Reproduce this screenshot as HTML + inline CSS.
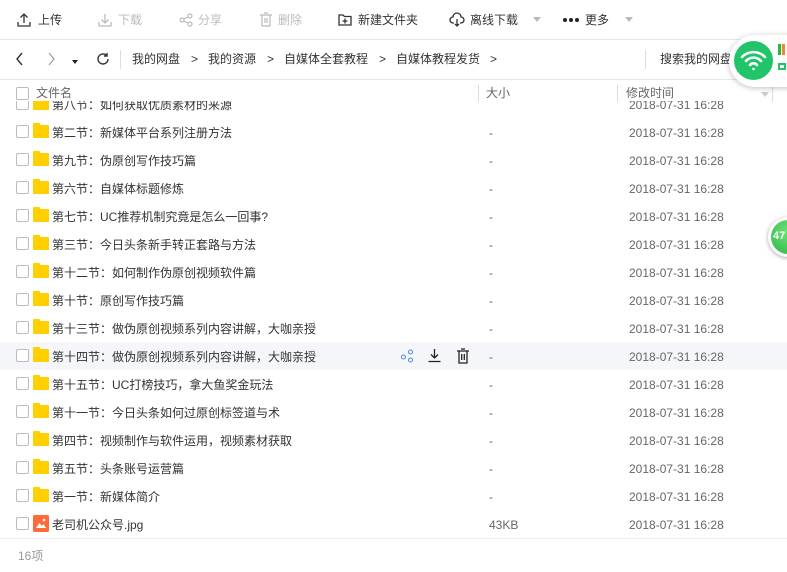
<!DOCTYPE html>
<html><head><meta charset="utf-8"><style>
*{margin:0;padding:0;box-sizing:border-box}
body{width:787px;height:572px;overflow:hidden;background:#fff;font-family:"Liberation Sans","Noto Sans CJK SC",sans-serif;font-size:12px;color:#333;position:relative}
.a{position:absolute;white-space:nowrap}
.tb{top:12px;font-size:12px;line-height:16px}
.dis{color:#bbb}
.hl{position:absolute;left:0;width:787px;height:1px;background:#e8e8e8}
.row{position:absolute;left:0;width:787px;height:28px}
.cb{position:absolute;left:16px;top:7px;width:13px;height:13px;border:1px solid #bbb;border-radius:2px;background:#fff}
.fd{position:absolute;left:33px;top:7px;width:16px;height:13px;background:#ffcf00;border-radius:1px}
.fd:before{content:"";position:absolute;left:0;top:-2px;width:7px;height:3px;background:#ffcf00;border-radius:1px 1px 0 0}
.nm{position:absolute;left:52px;top:7px;line-height:16px;color:#333}
.sz{position:absolute;left:489px;top:7px;line-height:16px;color:#666}
.dt{position:absolute;left:629px;top:7px;line-height:16px;color:#666}
.bc{position:absolute;top:51px;line-height:16px}
.dot{position:absolute;top:18px;width:4px;height:4px;border-radius:50%;background:#222}
</style></head><body>
<svg class="a" style="left:16px;top:12px" width="16" height="16" viewBox="0 0 16 16" fill="none" stroke="#333" stroke-width="1.3"><path d="M8 11V2M4.5 5.5L8 2l3.5 3.5M2 10v4h12v-4"/></svg>
<div class="a tb" style="left:38px">上传</div>
<svg class="a" style="left:97px;top:12px" width="16" height="16" viewBox="0 0 16 16" fill="none" stroke="#bbb" stroke-width="1.3"><path d="M8 2v9M4.5 7.5L8 11l3.5-3.5M2 10v4h12v-4"/></svg>
<div class="a tb dis" style="left:118px">下载</div>
<svg class="a" style="left:178px;top:12px" width="16" height="16" viewBox="0 0 16 16" fill="none" stroke="#bbb" stroke-width="1.2"><circle cx="4" cy="8" r="2"/><circle cx="12" cy="4" r="2"/><circle cx="12" cy="12" r="2"/><path d="M6 7l4-2M6 9l4 2"/></svg>
<div class="a tb dis" style="left:198px">分享</div>
<svg class="a" style="left:258px;top:12px" width="16" height="16" viewBox="0 0 16 16" fill="none" stroke="#bbb" stroke-width="1.2"><path d="M2 3h12M4 3v11h8V3M6 1h4M7 6v5M9 6v5"/></svg>
<div class="a tb dis" style="left:278px">删除</div>
<svg class="a" style="left:337px;top:12px" width="16" height="16" viewBox="0 0 16 16" fill="none" stroke="#333" stroke-width="1.3"><path d="M2 3h4l1.5 1.5H14V13H2zM8 6.5v5M5.5 9h5"/></svg>
<div class="a tb" style="left:358px">新建文件夹</div>
<svg class="a" style="left:449px;top:12px" width="16" height="16" viewBox="0 0 16 16" fill="none" stroke="#333" stroke-width="1.3"><path d="M5 11H4a3 3 0 0 1 0-6 4 4 0 0 1 8 0 3 3 0 0 1 0 6h-1M8 7v7M6 12l2 2 2-2"/></svg>
<div class="a tb" style="left:470px">离线下载</div>
<div class="a" style="left:533px;top:17px;width:0;height:0;border-left:4px solid transparent;border-right:4px solid transparent;border-top:5px solid #bbb"></div>
<div class="dot" style="left:563px"></div><div class="dot" style="left:569px"></div><div class="dot" style="left:575px"></div>
<div class="a tb" style="left:585px">更多</div>
<div class="a" style="left:625px;top:17px;width:0;height:0;border-left:4px solid transparent;border-right:4px solid transparent;border-top:5px solid #bbb"></div>
<div class="hl" style="top:39px"></div>
<svg class="a" style="left:14px;top:52px" width="12" height="14" viewBox="0 0 12 14" fill="none" stroke="#333" stroke-width="1.4"><path d="M8 1L3 7l5 6"/></svg>
<svg class="a" style="left:45px;top:52px" width="12" height="14" viewBox="0 0 12 14" fill="none" stroke="#999" stroke-width="1.2"><path d="M4 1l5 6-5 6"/></svg>
<div class="a" style="left:72px;top:60px;width:0;height:0;border-left:3.5px solid transparent;border-right:3.5px solid transparent;border-top:4px solid #222"></div>
<svg class="a" style="left:96px;top:52px" width="14" height="14" viewBox="0 0 14 14" fill="none" stroke="#333" stroke-width="1.4"><path d="M12 7a5 5 0 1 1-1.5-3.6M11 1v3H8"/></svg>
<div class="a" style="left:120px;top:50px;width:1px;height:19px;background:#ddd"></div>
<div class="bc" style="left:132px">我的网盘</div><div class="bc" style="left:191px">&gt;</div>
<div class="bc" style="left:208px">我的资源</div><div class="bc" style="left:267px">&gt;</div>
<div class="bc" style="left:284px">自媒体全套教程</div><div class="bc" style="left:379px">&gt;</div>
<div class="bc" style="left:396px">自媒体教程发货</div><div class="bc" style="left:490px">&gt;</div>
<div class="a" style="left:645px;top:50px;width:1px;height:19px;background:#ddd"></div>
<div class="a" style="left:660px;top:51px;line-height:16px">搜索我的网盘</div>
<div class="hl" style="top:79px"></div>
<div class="cb" style="top:87px"></div>
<div class="a" style="left:36px;top:85px;line-height:16px;color:#666">文件名</div>
<div class="a" style="left:478px;top:85px;width:1px;height:17px;background:#ddd"></div>
<div class="a" style="left:486px;top:85px;line-height:16px;color:#666">大小</div>
<div class="a" style="left:617px;top:85px;width:1px;height:17px;background:#ddd"></div>
<div class="a" style="left:626px;top:85px;line-height:16px;color:#666">修改时间</div>
<div class="a" style="left:761px;top:92px;width:0;height:0;border-left:4px solid transparent;border-right:4px solid transparent;border-top:5px solid #ccc"></div>
<div class="a" style="left:772px;top:85px;width:1px;height:17px;background:#ddd"></div>
<div style="position:absolute;left:0;top:101px;width:787px;height:437px;overflow:hidden">
<div class="row" style="top:-11px"><div class="cb"></div><div class="fd"></div><div class="nm">第八节：如何获取优质素材的来源</div><div class="dt">2018-07-31 16:28</div></div>
<div class="row" style="top:17px"><div class="cb"></div><div class="fd"></div><div class="nm">第二节：新媒体平台系列注册方法</div><div class="sz">-</div><div class="dt">2018-07-31 16:28</div></div>
<div class="row" style="top:45px"><div class="cb"></div><div class="fd"></div><div class="nm">第九节：伪原创写作技巧篇</div><div class="sz">-</div><div class="dt">2018-07-31 16:28</div></div>
<div class="row" style="top:73px"><div class="cb"></div><div class="fd"></div><div class="nm">第六节：自媒体标题修炼</div><div class="sz">-</div><div class="dt">2018-07-31 16:28</div></div>
<div class="row" style="top:101px"><div class="cb"></div><div class="fd"></div><div class="nm">第七节：UC推荐机制究竟是怎么一回事?</div><div class="sz">-</div><div class="dt">2018-07-31 16:28</div></div>
<div class="row" style="top:129px"><div class="cb"></div><div class="fd"></div><div class="nm">第三节：今日头条新手转正套路与方法</div><div class="sz">-</div><div class="dt">2018-07-31 16:28</div></div>
<div class="row" style="top:157px"><div class="cb"></div><div class="fd"></div><div class="nm">第十二节：如何制作伪原创视频软件篇</div><div class="sz">-</div><div class="dt">2018-07-31 16:28</div></div>
<div class="row" style="top:185px"><div class="cb"></div><div class="fd"></div><div class="nm">第十节：原创写作技巧篇</div><div class="sz">-</div><div class="dt">2018-07-31 16:28</div></div>
<div class="row" style="top:213px"><div class="cb"></div><div class="fd"></div><div class="nm">第十三节：做伪原创视频系列内容讲解，大咖亲授</div><div class="sz">-</div><div class="dt">2018-07-31 16:28</div></div>
<div class="row" style="top:241px;background:#f4f6fa"><div class="cb"></div><div class="fd"></div><div class="nm">第十四节：做伪原创视频系列内容讲解，大咖亲授</div>
<svg class="a" style="left:400px;top:7px" width="14" height="14" viewBox="0 0 14 14" fill="none" stroke="#4a90e2" stroke-width="1.1"><circle cx="3.5" cy="8" r="2"/><circle cx="10.5" cy="3" r="2"/><circle cx="10.5" cy="11" r="2"/></svg>
<svg class="a" style="left:427px;top:6px" width="15" height="15" viewBox="0 0 15 15" fill="none" stroke="#222" stroke-width="1.3"><path d="M7.5 1v9M4 6.5l3.5 3.5 3.5-3.5M1.5 13.5h12"/></svg>
<svg class="a" style="left:456px;top:6px" width="14" height="16" viewBox="0 0 14 16" fill="none" stroke="#222" stroke-width="1.3"><path d="M1 3h12M3 3v12h8V3M5 1h4M5.7 6v6M8.3 6v6"/></svg>
<div class="sz">-</div><div class="dt">2018-07-31 16:28</div></div>
<div class="row" style="top:269px"><div class="cb"></div><div class="fd"></div><div class="nm">第十五节：UC打榜技巧，拿大鱼奖金玩法</div><div class="sz">-</div><div class="dt">2018-07-31 16:28</div></div>
<div class="row" style="top:297px"><div class="cb"></div><div class="fd"></div><div class="nm">第十一节：今日头条如何过原创标签道与术</div><div class="sz">-</div><div class="dt">2018-07-31 16:28</div></div>
<div class="row" style="top:325px"><div class="cb"></div><div class="fd"></div><div class="nm">第四节：视频制作与软件运用，视频素材获取</div><div class="sz">-</div><div class="dt">2018-07-31 16:28</div></div>
<div class="row" style="top:353px"><div class="cb"></div><div class="fd"></div><div class="nm">第五节：头条账号运营篇</div><div class="sz">-</div><div class="dt">2018-07-31 16:28</div></div>
<div class="row" style="top:381px"><div class="cb"></div><div class="fd"></div><div class="nm">第一节：新媒体简介</div><div class="sz">-</div><div class="dt">2018-07-31 16:28</div></div>
<div class="row" style="top:409px"><div class="cb"></div>
<svg class="a" style="left:33px;top:5px" width="16" height="17" viewBox="0 0 16 17"><rect width="16" height="17" rx="1.5" fill="#ff6a3a"/><path d="M3 13l3.5-5 2.5 3 1.5-2 2.5 4z" fill="#fff"/><circle cx="11" cy="5" r="1.3" fill="#fff"/></svg>
<div class="nm">老司机公众号.jpg</div><div class="sz">43KB</div><div class="dt">2018-07-31 16:28</div></div>
</div>
<div class="hl" style="top:538px;background:#eee"></div>
<div class="a" style="left:18px;top:548px;line-height:16px;color:#999">16项</div>
<div class="a" style="left:729px;top:35px;width:70px;height:52px;background:#fff;border-radius:26px 0 0 26px;box-shadow:0 1px 6px rgba(0,0,0,.25)"></div>
<div class="a" style="left:734px;top:41px;width:39px;height:39px;border-radius:50%;background:#22c46a"></div>
<svg class="a" style="left:740px;top:48px" width="27" height="24" viewBox="0 0 27 24" fill="none" stroke="#fff" stroke-width="2.6" stroke-linecap="round"><path d="M2 9a16 16 0 0 1 23 0M6 13a10 10 0 0 1 15 0M10 17a4.5 4.5 0 0 1 7 0"/><circle cx="13.5" cy="21" r="1.3" fill="#fff" stroke="none"/></svg>
<div class="a" style="left:778px;top:44px;width:3px;height:11px;background:#2bb34a"></div>
<div class="a" style="left:782px;top:44px;width:3px;height:11px;background:#f28a1e"></div>
<div class="a" style="left:778px;top:63px;width:8px;height:7px;border:2px solid #22c46a"></div>
<div class="a" style="left:768px;top:217px;width:40px;height:40px;border-radius:50%;background:#fff;box-shadow:0 1px 4px rgba(0,0,0,.35)"></div>
<div class="a" style="left:771px;top:220px;width:34px;height:34px;border-radius:50%;background:radial-gradient(circle at 50% 35%,#6ee27a,#2fb544)"></div>
<div class="a" style="left:773px;top:229px;color:#fff;font-weight:bold;font-size:11px;line-height:14px">47</div>
</body></html>
